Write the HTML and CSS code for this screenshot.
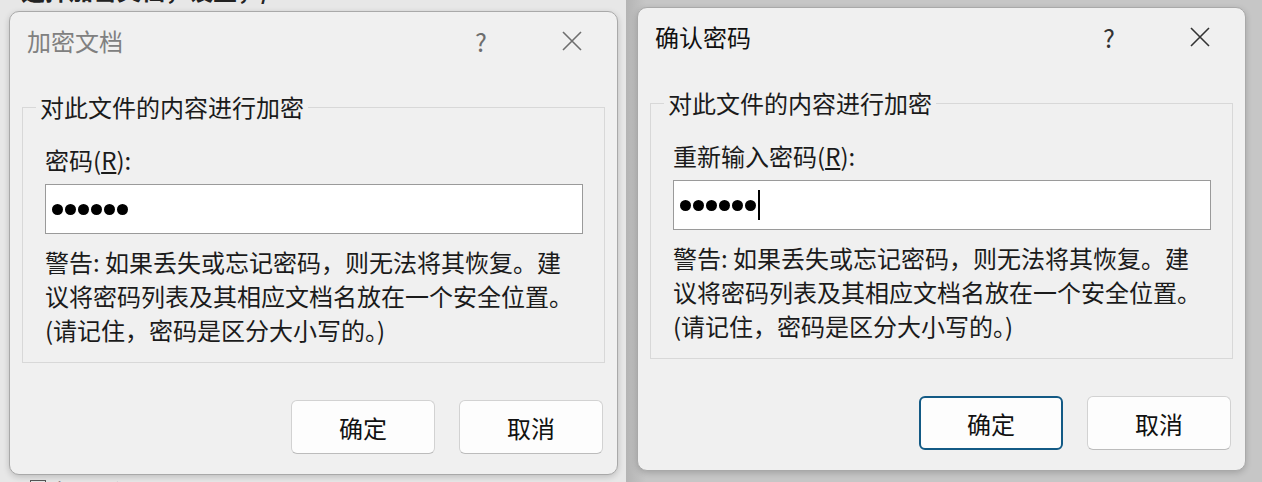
FILE: index.html
```html
<!DOCTYPE html>
<html lang="zh-CN">
<head>
    <meta charset="UTF-8">
    <title>加密文档 / 确认密码</title>
    <link rel="stylesheet" href="styles.css">
</head>
<body>

    <!-- linker Bildschirm: Kennwort eingeben -->
    <div class="screen screen-left">
        <div class="cut-top"><span>选择加密文档，设置，/</span></div>

        <div class="dialog inactive">
            <div class="titlebar">
                <span class="title">加密文档</span>
                <span class="help">?</span>
                <span class="close">
                    <svg width="20" height="20" viewBox="0 0 20 20"><path d="M1 1 L19 19 M19 1 L1 19" /></svg>
                </span>
            </div>

            <fieldset class="group">
                <legend>对此文件的内容进行加密</legend>
                <div class="label">密码(<u>R</u>):</div>
                <div class="field">
                    <span class="dot"></span><span class="dot"></span><span class="dot"></span>
                    <span class="dot"></span><span class="dot"></span><span class="dot"></span>
                </div>
                <p class="warn">警告: 如果丢失或忘记密码，则无法将其恢复。建<br>议将密码列表及其相应文档名放在一个安全位置。<br>(请记住，密码是区分大小写的。)</p>
            </fieldset>

            <div class="actions">
                <button class="btn">确定</button>
                <button class="btn">取消</button>
            </div>
        </div>

        <div class="cut-bottom"><span class="box"></span>如图所示设置</div>
    </div>

    <!-- rechter Bildschirm: Kennwort bestaetigen -->
    <div class="screen screen-right">
        <div class="dialog">
            <div class="titlebar">
                <span class="title">确认密码</span>
                <span class="help">?</span>
                <span class="close">
                    <svg width="20" height="20" viewBox="0 0 20 20"><path d="M1 1 L19 19 M19 1 L1 19" /></svg>
                </span>
            </div>

            <fieldset class="group">
                <legend>对此文件的内容进行加密</legend>
                <div class="label">重新输入密码(<u>R</u>):</div>
                <div class="field">
                    <span class="dot"></span><span class="dot"></span><span class="dot"></span>
                    <span class="dot"></span><span class="dot"></span><span class="dot"></span>
                    <span class="caret"></span>
                </div>
                <p class="warn">警告: 如果丢失或忘记密码，则无法将其恢复。建<br>议将密码列表及其相应文档名放在一个安全位置。<br>(请记住，密码是区分大小写的。)</p>
            </fieldset>

            <div class="actions">
                <button class="btn btn-default">确定</button>
                <button class="btn">取消</button>
            </div>
        </div>
    </div>

</body>
</html>
```

FILE: styles.css
```css
body {
    margin: 0;
    width: 1262px;
    height: 482px;
    overflow: hidden;
    display: flex;
    font-family: "Noto Sans CJK SC", "Noto Sans", sans-serif;
    font-size: 24px;
    color: #1b1b1b;
}

/* Bildschirme */
.screen {
    height: 482px;
    overflow: hidden;
}

.screen-left {
    width: 626px;
    padding-left: 9px;
    box-sizing: border-box;
    background-color: #e7e7e7;
}

.screen-right {
    width: 636px;
    padding: 7px 0 0 11px;
    box-sizing: border-box;
    background: linear-gradient(to right, #b4b4b4, #c6c6c6 20px);
}

/* abgeschnittene Reste vom Hintergrund */
.cut-top {
    height: 11px;
    overflow: hidden;
    padding-left: 12px;
}

.cut-top span {
    display: block;
    margin-top: -22px;
    line-height: 24px;
    font-weight: bold;
    color: #222;
}

.cut-bottom {
    margin-top: 3px;
    padding-left: 21px;
    display: flex;
    align-items: flex-start;
    gap: 8px;
    font-size: 22px;
    line-height: 24px;
    color: #333;
}

.cut-bottom .box {
    width: 14px;
    height: 14px;
    border: 1px solid #555;
    margin-top: 2px;
}

/* Dialog */
.dialog {
    width: 609px;
    height: 464px;
    box-sizing: border-box;
    background-color: #f0f0f0;
    border: 1px solid #a9a9a9;
    border-radius: 10px;
    box-shadow: 0 2px 6px rgba(0, 0, 0, 0.18);
}

.titlebar {
    height: 57px;
    display: flex;
    align-items: center;
    padding: 0 15px 0 17px;
}

.title {
    flex: 1;
    color: #111;
}

.help {
    width: 60px;
    text-align: center;
    margin-right: 31px;
    font-size: 25px;
    color: #333;
}

.close {
    width: 60px;
    display: flex;
    justify-content: center;
}

.close path {
    stroke: #333;
    stroke-width: 1.6;
    fill: none;
}

.inactive .title { color: #808080; }
.inactive .help { color: #6e6e6e; }
.inactive .close path { stroke: #6e6e6e; }

/* Gruppenrahmen */
.group {
    margin: 21px 12px 0 12px;
    padding: 0 21px 15px 22px;
    border: 1px solid #d8d8d8;
    min-inline-size: 0;
}

.group legend {
    margin-left: -9px;
    padding: 0 4px;
    line-height: 34px;
}

.label {
    margin-top: 19px;
    line-height: 34px;
}

.label u {
    text-underline-offset: 2px;
}

.field {
    margin-top: 7px;
    height: 50px;
    box-sizing: border-box;
    border: 1px solid #9a9a9a;
    background-color: #fff;
    display: flex;
    align-items: center;
    gap: 2px;
    padding-left: 6px;
}

.dot {
    width: 11px;
    height: 11px;
    border-radius: 50%;
    background-color: #000;
}

.caret {
    width: 2px;
    height: 30px;
    background-color: #000;
}

.warn {
    margin: 11px 0 0;
    line-height: 34px;
    white-space: nowrap;
}

/* Schaltflaechen */
.actions {
    margin-top: 37px;
    display: flex;
    justify-content: flex-end;
    gap: 24px;
    padding-right: 14px;
}

.btn {
    width: 144px;
    height: 54px;
    font-family: inherit;
    font-size: 24px;
    color: #111;
    background-color: #fdfdfd;
    border: 1px solid #d2d2d2;
    border-bottom-color: #bcbcbc;
    border-radius: 6px;
}

.btn-default {
    border: 2px solid #135a85;
}
```
